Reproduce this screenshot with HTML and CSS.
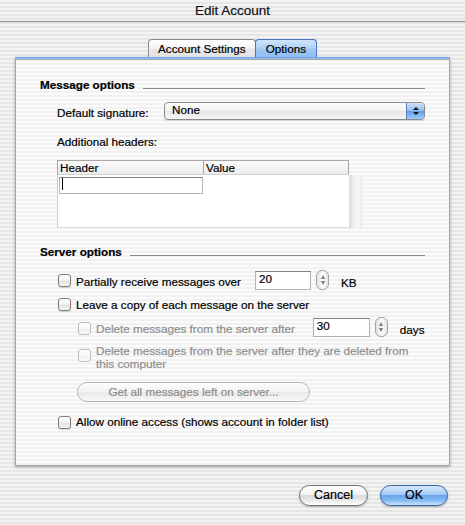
FILE: index.html
```
<!DOCTYPE html>
<html>
<head>
<meta charset="utf-8">
<title>Edit Account</title>
<link rel="stylesheet" href="styles.css">
</head>
<body>
<div class="titlebar">Edit Account</div>
<div class="tabs">
  <div class="tab">Account Settings</div>
  <div class="tab tab-active">Options</div>
</div>
<div class="panel">
  <div class="panel-band"></div>
  <div class="panel-body">
    <div class="section-head"><span>Message options</span><div class="rule"></div></div>
    <div class="sig-row">
      <span class="sig-label">Default signature:</span>
      <div class="popup"><span class="popup-text">None</span><span class="popup-arrows"></span></div>
    </div>
    <div class="add-headers">Additional headers:</div>
    <div class="table">
      <div class="table-main">
        <div class="thead"><div class="th th-first">Header</div><div class="th">Value</div></div>
        <div class="tbody"><div class="tfield"><span class="caret"></span></div></div>
      </div>
      <div class="scroll-track"></div>
    </div>
    <div class="section-head second"><span>Server options</span><div class="rule"></div></div>
    <div class="row row1">
      <span class="cb cb-1"></span>
      <span class="lbl lbl-1">Partially receive messages over</span>
      <div class="num num-1">20</div>
      <div class="stepper"></div>
      <span class="unit unit-1">KB</span>
    </div>
    <div class="row row2">
      <span class="cb cb-2"></span>
      <span class="lbl">Leave a copy of each message on the server</span>
    </div>
    <div class="row row3">
      <span class="cb cb-dis cb-3"></span>
      <span class="lbl lbl-dis lbl-3">Delete messages from the server after</span>
      <div class="num num-3">30</div>
      <div class="stepper"></div>
      <span class="unit unit-3">days</span>
    </div>
    <div class="row row4">
      <span class="cb cb-dis cb-4"></span>
      <span class="lbl lbl-dis lbl-4">Delete messages from the server after they are deleted from this computer</span>
    </div>
    <div class="btn-get">Get all messages left on server...</div>
    <div class="row row5">
      <span class="cb cb-5"></span>
      <span class="lbl">Allow online access (shows account in folder list)</span>
    </div>
  </div>
</div>
<div class="buttons">
  <div class="btn btn-cancel">Cancel</div>
  <div class="btn btn-ok">OK</div>
</div>
</body>
</html>
```
FILE: styles.css
```
html, body {
  margin: 0;
  padding: 0;
}
body {
  width: 465px;
  height: 525px;
  overflow: hidden;
  font-family: "Liberation Sans", Arial, sans-serif;
  font-size: 11.7px;
  color: #000;
  -webkit-text-stroke: 0.2px currentColor;
  background: repeating-linear-gradient(to bottom, #f3f3f3 0, #f3f3f3 2px, #e6e6e6 2px, #e6e6e6 4px);
}
.titlebar {
  height: 21px;
  line-height: 21px;
  font-size: 13.5px;
  text-align: center;
  border-bottom: 1px solid #8c8c8c;
  color: #111;
}
.tabs {
  display: flex;
  justify-content: center;
  margin-top: 17px;
  height: 18px;
}
.tab {
  height: 18px;
  box-sizing: border-box;
  padding: 0 9px;
  border: 1px solid #8a8a8a;
  border-bottom: none;
  border-radius: 4px 4px 0 0;
  background: linear-gradient(#ffffff, #f6f6f6 45%, #e8e8e8 55%, #e2e2e2);
  line-height: 17px;
}
.tab-active {
  padding: 0 10px;
  margin-left: -1px;
  border-color: #4a74bd;
  background: linear-gradient(#cfe4fb, #b3d3f6 45%, #9ec7f3 55%, #8ebef2);
}
.panel {
  margin-left: 15px;
  width: 435px;
  height: 409px;
  box-sizing: border-box;
  border: 1px solid #a4a4a4;
  border-top: none;
  background: repeating-linear-gradient(to bottom, #fbfbfb 0, #fbfbfb 2px, #f1f1f1 2px, #f1f1f1 4px);
  box-shadow: 0 1px 3px rgba(0, 0, 0, 0.3);
  display: flex;
  flex-direction: column;
}
.panel-band {
  height: 3px;
  margin: 0 -1px;
  background: linear-gradient(#6a9be0, #8fbcf0 50%, #9d9d9d 51%, #b0b0b0);
}
.panel-body {
  padding: 17px 24px 0 24px;
  display: flex;
  flex-direction: column;
}
.section-head {
  display: flex;
  height: 15px;
  line-height: 15px;
  font-weight: bold;
}
.section-head.second {
  margin-top: 16px;
}
.rule {
  flex: 1;
  height: 1px;
  background: #8a8a8a;
  margin-top: 11px;
  margin-left: 8px;
}
.sig-row {
  display: flex;
  margin-top: 10px;
  margin-left: 17px;
  height: 18px;
}
.sig-label {
  width: 107px;
  margin-top: 3px;
  line-height: 15px;
  flex: none;
}
.popup {
  flex: 1;
  height: 18px;
  box-sizing: border-box;
  border: 1px solid #8b8b8b;
  border-radius: 4px;
  background: linear-gradient(#fdfdfd, #f1f1f1 50%, #e6e6e6 51%, #f5f5f5);
  display: flex;
  overflow: hidden;
  box-shadow: 0 1px 1px rgba(0, 0, 0, 0.12);
}
.popup-text {
  flex: 1;
  padding-left: 7px;
  line-height: 14px;
}
.popup-arrows {
  width: 17px;
  border-left: 1px solid #5a7fb8;
  background: linear-gradient(#cfe3fb, #8fbdf1 50%, #5f9de9 51%, #9fcaf6);
  display: flex;
  flex-direction: column;
  align-items: center;
  justify-content: center;
  gap: 2px;
}
.popup-arrows::before {
  content: "";
  border-left: 3px solid transparent;
  border-right: 3px solid transparent;
  border-bottom: 3px solid #111;
}
.popup-arrows::after {
  content: "";
  border-left: 3px solid transparent;
  border-right: 3px solid transparent;
  border-top: 3px solid #111;
}
.add-headers {
  margin-top: 14px;
  margin-left: 17px;
  line-height: 15px;
}
.table {
  display: flex;
  margin-top: 11px;
  margin-left: 17px;
}
.table-main {
  width: 292px;
}
.thead {
  display: flex;
  height: 15px;
  box-sizing: border-box;
  border: 1px solid #a6a6a6;
  border-bottom-color: #d2d2d2;
  background: linear-gradient(#fbfbfb, #ececec);
}
.th {
  line-height: 13px;
  padding-left: 2px;
}
.th-first {
  width: 143px;
  border-right: 1px solid #a2a2a2;
}
.tbody {
  height: 53px;
  box-sizing: border-box;
  background: #fff;
  border-left: 1px solid #cfcfcf;
  border-bottom: 1px solid #dcdcdc;
  padding: 2px 0 0 1px;
}
.tfield {
  width: 144px;
  height: 17px;
  box-sizing: border-box;
  border: 1px solid #b4b4b4;
  border-top-color: #7c7c7c;
  background: #fff;
}
.caret {
  display: block;
  width: 1px;
  height: 12px;
  background: #000;
  margin-left: 2px;
}
.scroll-track {
  width: 13px;
  margin-top: 15px;
  height: 53px;
  background: linear-gradient(to right, #dadada, #efefef 40%, #f7f7f7 70%, #ebebeb);
}
.row {
  display: flex;
  align-items: flex-start;
  line-height: 15px;
}
.cb {
  width: 13px;
  height: 13px;
  box-sizing: border-box;
  flex: none;
  border: 1px solid #7d7d7d;
  border-radius: 3px;
  background: linear-gradient(#ffffff, #efefef 50%, #dedede 51%, #f6f6f6);
  box-shadow: 0 1px 1px rgba(0, 0, 0, 0.15);
}
.cb-dis {
  border-color: #bdbdbd;
  background: linear-gradient(#ffffff, #f7f7f7 50%, #eeeeee 51%, #fafafa);
  box-shadow: none;
}
.lbl {
  margin-left: 5px;
}
.lbl-dis {
  color: #8e8e8e;
}
.num {
  height: 19px;
  box-sizing: border-box;
  border: 1px solid #b2b2b2;
  border-top-color: #808080;
  background: #fff;
  line-height: 14px;
  padding-left: 3px;
  flex: none;
}
.stepper {
  width: 13px;
  height: 20px;
  box-sizing: border-box;
  flex: none;
  margin-left: 5px;
  border: 1px solid #a3a3a3;
  border-radius: 6px;
  background: linear-gradient(to right, #e2e2e2, #fbfbfb 50%, #e6e6e6);
  display: flex;
  flex-direction: column;
  align-items: center;
  justify-content: space-between;
  padding: 4px 0;
}
.stepper::before {
  content: "";
  border-left: 2.5px solid transparent;
  border-right: 2.5px solid transparent;
  border-bottom: 4px solid #7a7a7a;
}
.stepper::after {
  content: "";
  border-left: 2.5px solid transparent;
  border-right: 2.5px solid transparent;
  border-top: 4px solid #7a7a7a;
}
.unit {
  margin-left: 12px;
  margin-top: 5px;
}
.row1 {
  margin-top: 11px;
  margin-left: 18px;
  height: 20px;
}
.cb-1 { margin-top: 4px; }
.lbl-1 { margin-top: 4px; }
.num-1 {
  margin-left: 14px;
  margin-top: 1px;
  width: 56px;
}
.row2 {
  margin-top: 7px;
  margin-left: 18px;
}
.cb-2 { margin-top: 1px; }
.row3 {
  margin-top: 5px;
  margin-left: 38px;
  height: 20px;
}
.cb-3 { margin-top: 5px; }
.lbl-3 { margin-top: 4px; }
.num-3 {
  margin-left: 18px;
  margin-top: 1px;
  width: 57px;
}
.row4 {
  margin-top: 7px;
  margin-left: 38px;
  line-height: 13px;
}
.cb-4 { margin-top: 5px; }
.lbl-4 { flex: 1; }
.btn-get {
  align-self: flex-start;
  margin-top: 12px;
  margin-left: 37px;
  width: 233px;
  height: 20px;
  box-sizing: border-box;
  border: 1px solid #b6b6b6;
  border-radius: 10px;
  background: linear-gradient(#fdfdfd, #f3f3f3 50%, #e8e8e8 51%, #f7f7f7);
  color: #8d8d8d;
  text-align: center;
  line-height: 18px;
}
.row5 {
  margin-top: 12px;
  margin-left: 18px;
}
.cb-5 { margin-top: 2px; }
.buttons {
  display: flex;
  justify-content: flex-end;
  gap: 12px;
  padding-right: 17px;
  margin-top: 19px;
}
.btn {
  height: 21px;
  box-sizing: border-box;
  border-radius: 11px;
  text-align: center;
  line-height: 19px;
  font-size: 12.5px;
}
.btn-cancel {
  width: 69px;
  border: 1px solid #6f6f6f;
  background: linear-gradient(#ffffff, #f2f2f2 45%, #dadada 50%, #e9e9e9 75%, #ffffff);
  box-shadow: 0 1px 2px rgba(0, 0, 0, 0.25);
}
.btn-ok {
  width: 68px;
  border: 1px solid #3462a8;
  background: linear-gradient(#d8e9fc, #a4caf4 45%, #6aa4ec 50%, #82b9f3 75%, #c9e4fc);
  box-shadow: 0 1px 2px rgba(0, 0, 0, 0.3);
}
```
